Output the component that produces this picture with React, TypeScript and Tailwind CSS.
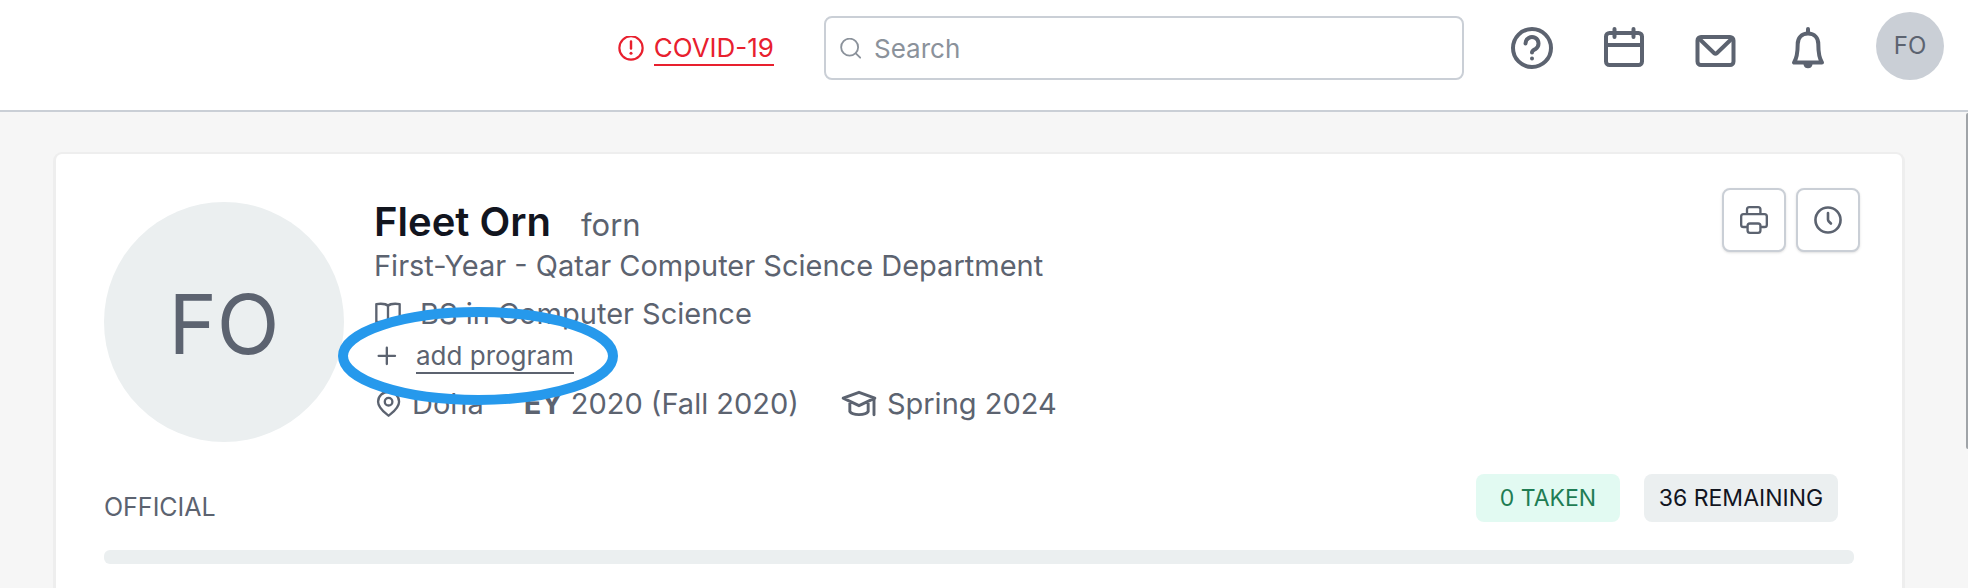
import type { ReactNode } from "react";

type IconProps = {
    size: string;
    stroke: number;
    children: ReactNode;
};

function Icon({ size, stroke, children }: IconProps) {
    return (
        <svg
            viewBox="0 0 48 48"
            className={`${size} shrink-0`}
            fill="none"
            stroke="currentColor"
            strokeWidth={stroke}
            strokeLinecap="round"
            strokeLinejoin="round"
            aria-hidden="true"
        >
            {children}
        </svg>
    );
}

const navItems = [
    {
        label: "Help",
        icon: (
            <>
                <circle cx="24" cy="24" r="19" />
                <path d="M17.500 19.500a6.500 6.500 0 1 1 10 5.500c-2.200 1.300-3.500 1.700-3.500 3.500" />
                <circle cx="24" cy="34.500" r="2" fill="currentColor" stroke="none" />
            </>
        ),
    },
    {
        label: "Calendar",
        icon: (
            <>
                <rect x="6" y="9" width="36" height="32" rx="3.500" />
                <path d="M6 21h36M14.500 5v8M33.500 5v8" />
            </>
        ),
    },
    {
        label: "Messages",
        icon: (
            <>
                <rect x="5.500" y="13" width="36" height="28" rx="3.500" />
                <path d="M7.500 15l14.500 14q1.500 1.400 3 0L39.500 15" />
            </>
        ),
    },
    {
        label: "Notifications",
        icon: (
            <>
                <path d="M24 5v4M24 9.500c-6.500 0-10.300 4.500-10.300 10.500 0 9-.7 14-3.700 18.500h28c-3-4.500-3.700-9.500-3.700-18.500 0-6-3.800-10.500-10.300-10.500z" />
                <path d="M20.500 40.500a3.600 3.600 0 0 0 7 0z" fill="currentColor" strokeWidth="2" />
            </>
        ),
    },
];

function Header() {
    return (
        <header className="flex h-28 items-start justify-end border-b-2 border-[#cacfd6] bg-white pl-8 pr-6">
            <a
                href="#covid"
                className="mt-[17px] flex h-16 items-center gap-2.5 text-[26px] leading-8 text-[#e8202e]"
            >
                <Icon size="size-[26px]" stroke={4}>
                    <circle cx="24" cy="22" r="21.500" />
                    <path d="M24 10v13" strokeWidth="4.500" />
                    <circle cx="24" cy="32" r="2.800" fill="currentColor" stroke="none" />
                </Icon>
                <span className="border-b-2 border-[#e8202e]">COVID-19</span>
            </a>
            <label className="ml-[50px] mt-4 flex h-16 w-[640px] min-w-0 items-center gap-3 rounded-lg border-2 border-[#cacfd6] px-[14px] pt-0.5 text-[#8b929b]">
                <Icon size="size-[22px]" stroke={4}>
                    <circle cx="21" cy="20" r="18.500" />
                    <path d="M35 34l9 9" />
                </Icon>
                <input
                    type="text"
                    placeholder="Search"
                    aria-label="Search"
                    className="min-w-0 flex-1 bg-transparent text-[26px] leading-8 outline-none placeholder:text-[#8b929b]"
                />
            </label>
            <nav className="ml-11 mt-6 flex items-center gap-11">
                {navItems.map((item) => (
                    <button key={item.label} type="button" aria-label={item.label}>
                        <Icon size="size-12" stroke={4}>
                            {item.icon}
                        </Icon>
                    </button>
                ))}
            </nav>
            <button
                type="button"
                className="ml-11 mt-3 size-[68px] shrink-0 rounded-full bg-[#cacfd6] text-2xl"
            >
                FO
            </button>
        </header>
    );
}

function Profile() {
    return (
        <div className="flex items-start">
            <div className="mt-3.5 flex size-60 shrink-0 items-center justify-center rounded-full bg-[#ebeff0] pt-1 text-[82px]">
                FO
            </div>

            <div className="relative ml-[30px] mt-3 flex-1 text-[29px]">
                <div className="flex items-baseline gap-[30px]">
                    <h1 className="text-[40px] font-semibold leading-[44px] text-[#12151f]">Fleet Orn</h1>
                    <span className="text-[31px] leading-[44px]">forn</span>
                </div>
                <p className="mt-px leading-9">First-Year - Qatar Computer Science Department</p>
                <p className="mt-3 flex items-center gap-[18px] leading-9">
                    <Icon size="size-7" stroke={4}>
                        <path d="M24 10c-4-4-12-4-20-3v31c8-1 16-1 20 4 4-5 12-5 20-4V7c-8-1-16-1-20 3zM24 10v31" />
                    </Icon>
                    BS in Computer Science
                </p>
                <p className="mt-2 flex items-center gap-[14px] text-[26px] leading-8">
                    <Icon size="size-7" stroke={4}>
                        <path d="M22 8v28M8 22h28" />
                    </Icon>
                    <a href="#add-program" className="border-b-2 border-current">
                        add program
                    </a>
                </p>
                <div className="mt-2.5 flex items-center gap-10 leading-9">
                    <span className="flex items-center gap-2.5">
                        <Icon size="size-7" stroke={4}>
                            <path d="M25 44c-3-3-18-12-18-24a18 17 0 0 1 36 0c0 12-15 21-18 24z" />
                            <circle cx="25" cy="20" r="6.500" />
                        </Icon>
                        Doha
                    </span>
                    <span>
                        <b className="font-bold">EY</b> 2020 (Fall 2020)
                    </span>
                    <span className="flex items-center gap-2">
                        <Icon size="size-10" stroke={3.5}>
                            <path d="M5 17L24 10l19 7-19 9zM13 21v12c3 5 19 5 22 0V21M42 18v19" />
                        </Icon>
                        Spring 2024
                    </span>
                </div>

                {/* highlight around the add program link */}
                <svg
                    viewBox="0 0 282 100"
                    className="pointer-events-none absolute -left-9 top-[106px] h-[100px] w-[282px] text-[#2699ec]"
                    fill="none"
                    stroke="currentColor"
                    strokeWidth="10"
                    aria-hidden="true"
                >
                    <ellipse cx="140" cy="50" rx="135" ry="44" />
                </svg>
            </div>

            <div className="flex gap-2.5">
                <button
                    type="button"
                    aria-label="Print"
                    className="flex size-16 items-center justify-center rounded-lg border-2 border-[#cacfd6] bg-white shadow-sm"
                >
                    <Icon size="size-7" stroke={4}>
                        <path d="M12 13V6q0-4 4-4h15q4 0 4 4v7" />
                        <path d="M12 36H6q-4 0-4-4V18q0-4 4-4h36q4 0 4 4v14q0 4-4 4h-6" />
                        <rect x="13" y="30" width="22" height="16" rx="4" />
                    </Icon>
                </button>
                <button
                    type="button"
                    aria-label="History"
                    className="flex size-16 items-center justify-center rounded-lg border-2 border-[#cacfd6] bg-white shadow-sm"
                >
                    <Icon size="size-7" stroke={4.5}>
                        <circle cx="24" cy="24" r="21.500" />
                        <path d="M24 12v11q0 2 1.500 3.500L29 30" />
                    </Icon>
                </button>
            </div>
        </div>
    );
}

function Progress() {
    return (
        <section className="mt-8 pr-1.5">
            <div className="flex items-start justify-between pr-4 leading-8">
                <h2 className="mt-[17px] text-[25px]">OFFICIAL</h2>
                <div className="flex gap-6 text-[23px]">
                    <span className="flex h-12 w-36 items-center justify-center rounded-lg bg-[#e2faf2] text-[#1f7d54]">
                        0 TAKEN
                    </span>
                    <span className="flex h-12 w-[194px] items-center justify-center rounded-lg bg-[#ebeff0] text-[#12151f]">
                        36 REMAINING
                    </span>
                </div>
            </div>
            <div className="mt-[27px] h-3.5 rounded-md bg-[#ebeff0]" />
        </section>
    );
}

export default function App() {
    return (
        <div className="relative flex min-h-screen flex-col overflow-hidden bg-[#f6f6f6] font-['Inter',sans-serif] text-[#5c6370]">
            <Header />
            <main className="ml-14 mr-[66px] mt-[42px] flex-1 rounded-t-md bg-white pl-12 pr-[42px] pt-[34px] shadow-[0_1px_0_3px_#eeeeee]">
                <Profile />
                <Progress />
            </main>
            {/* scrollbar thumb */}
            <div className="absolute right-0 top-[113px] h-84 w-0.5 rounded-l bg-[#a0a4a8]" />
        </div>
    );
}
